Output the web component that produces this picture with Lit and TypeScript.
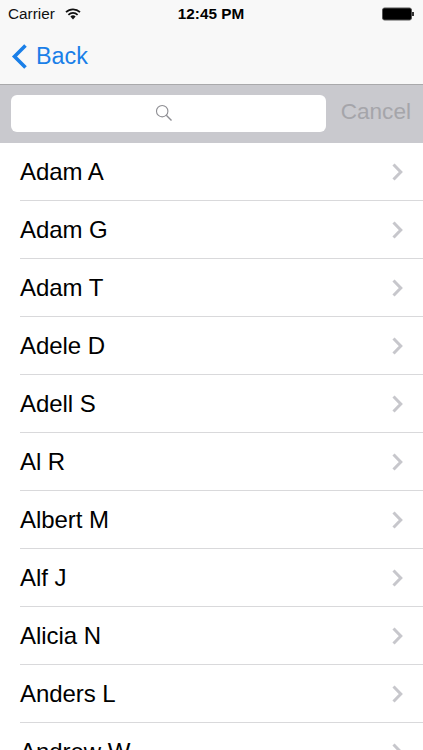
import { LitElement, html, css } from "lit";
import { customElement } from "lit/decorators.js";

const NAMES = ["Adam A","Adam G","Adam T","Adele D","Adell S","Al R","Albert M","Alf J","Alicia N","Anders L","Andrew W"];

@customElement("app-root")
export class AppRoot extends LitElement {
  static styles = css`
    :host { display: block; width: 423px; height: 750px; overflow: hidden; background: #fff; font-family: "Liberation Sans", Arial, sans-serif; color: #000; }
    .nav { height: 84px; background: #f8f8f8; border-bottom: 1px solid #a9a9ab; display: flex; flex-direction: column; }
    .status { height: 28px; display: grid; grid-template-columns: 1fr auto 1fr; align-items: center; padding: 0 8px; font-size: 15.3px; }
    .carrier { display: flex; align-items: center; gap: 10px; color: #111; }
    .time { font-weight: 700; font-size: 15.3px; margin-left: -1px; }
    .batt { justify-self: end; display: flex; }
    .back { flex: 1; display: flex; align-items: center; gap: 8px; padding: 0 0 0 11px; color: #1a7fe8; font-size: 23.3px; }
    .search { height: 58px; background: #c9c9ce; display: flex; align-items: center; padding: 0 12px 2px 11px; box-sizing: border-box; }
    .field { width: 315px; height: 37px; background: #fff; border-radius: 6px; display: flex; align-items: center; justify-content: center; padding-right: 10px; box-sizing: border-box; }
    .cancel { margin-left: auto; font-size: 22.6px; color: #a5a5aa; margin-bottom: 2px; }
    .row { height: 58px; box-sizing: border-box; margin-left: 20px; border-bottom: 1px solid #d9d9db; display: flex; align-items: center; justify-content: space-between; padding: 0 20px 0 0; font-size: 24px; letter-spacing: -0.05px; }
    svg { display: block; }
  `;
  render() {
    return html`
      <div class="nav">
        <div class="status">
          <div class="carrier">Carrier
            <svg width="16" height="12" viewBox="0 0 16 12"><g fill="none" stroke="#111" stroke-width="1.7"><path d="M1 4.2a10 10 0 0 1 14 0"/><path d="M3.4 6.8a6.6 6.6 0 0 1 9.2 0"/></g><path d="M5.4 8.6a3.6 3.6 0 0 1 5.2 0L8 11.4z" fill="#111"/></svg>
          </div>
          <div class="time">12:45 PM</div>
          <div class="batt"><svg width="33" height="14" viewBox="0 0 33 14"><rect x="0.5" y="1" width="29" height="12" rx="2" fill="#000" stroke="#555"/><rect x="30" y="5" width="2" height="4" fill="#333"/></svg></div>
        </div>
        <div class="back">
          <svg width="17" height="27" viewBox="0 0 17 27"><path d="M14.5 2.5 3.5 13.5l11 11" fill="none" stroke="#1a7fe8" stroke-width="3.6"/></svg>
          <span>Back</span>
        </div>
      </div>
      <div class="search">
        <div class="field"><svg width="18" height="18" viewBox="0 0 18 18"><circle cx="7.2" cy="7.2" r="5.7" fill="none" stroke="#8e8e93" stroke-width="1.1"/><path d="M11.3 11.3l5.2 5.2" stroke="#8e8e93" stroke-width="1.4"/></svg></div>
        <div class="cancel">Cancel</div>
      </div>
      ${NAMES.map(n => html`<div class="row"><span>${n}</span>
        <svg width="12" height="18" viewBox="0 0 12 18"><path d="M2.5 1.5 9.8 9l-7.3 7.5" fill="none" stroke="#c7c7cc" stroke-width="3"/></svg></div>`)}
    `;
  }
}
